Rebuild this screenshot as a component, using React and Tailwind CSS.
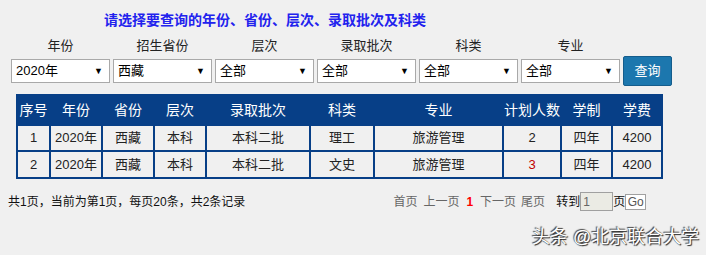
import React from "react";

const font = { fontFamily: "'Liberation Sans', 'Noto Sans CJK SC', sans-serif" };

const filters = [
  ["年份", "2020年"],
  ["招生省份", "西藏"],
  ["层次", "全部"],
  ["录取批次", "全部"],
  ["科类", "全部"],
  ["专业", "全部"],
];

const headers = ["序号", "年份", "省份", "层次", "录取批次", "科类", "专业", "计划人数", "学制", "学费"];
const widths = [33, 52, 52, 52, 104, 64, 129, 58, 51, 50];
const rows = [
  ["1", "2020年", "西藏", "本科", "本科二批", "理工", "旅游管理", "2", "四年", "4200"],
  ["2", "2020年", "西藏", "本科", "本科二批", "文史", "旅游管理", "3", "四年", "4200"],
];

function Select({ value }) {
  return (
    <div className="flex h-[24px] w-[99px] items-center justify-between border border-[#a9a9a9] bg-white pl-[4px] pr-[6px] text-[13px] text-black">
      <span>{value}</span>
      <span className="text-[9px] leading-none">▼</span>
    </div>
  );
}

export default function App() {
  return (
    <div className="relative h-[255px] w-[706px] overflow-hidden bg-[#f0f0f0] text-black" style={font}>
      <div className="pl-[104px] pt-[11px] text-[14px] font-bold leading-[18px] text-[#2222ee]">
        请选择要查询的年份、省份、层次、录取批次及科类
      </div>
      <div className="mt-[9px] flex items-end gap-[3px] pl-[11px]">
        {filters.map(([label, value]) => (
          <div key={label} className="flex flex-col items-center">
            <div className="mb-[5px] text-[13px] leading-[16px] text-[#222]">{label}</div>
            <Select value={value} />
          </div>
        ))}
        <button className="mb-[-3px] ml-[0px] h-[30px] w-[49px] rounded-[2px] border border-[#155d8c] bg-[#1c77ae] text-[13px] text-white">
          查询
        </button>
      </div>
      <table className="ml-[16px] mt-[11px] w-[645px] table-fixed border-collapse text-[13px]">
        <colgroup>
          {widths.map((w, i) => (
            <col key={i} style={{ width: w }} />
          ))}
        </colgroup>
        <thead>
          <tr className="h-[30px] bg-[#073f87] text-white">
            {headers.map((h) => (
              <th key={h} className="border-2 border-[#073f87] p-0 text-[14px] font-normal">
                {h}
              </th>
            ))}
          </tr>
        </thead>
        <tbody>
          {rows.map((r, ri) => (
            <tr key={ri} className={ri === 0 ? "h-[26px]" : "h-[27px]"}>
              {r.map((c, ci) => (
                <td
                  key={ci}
                  className={`border-2 border-[#073f87] p-0 text-center text-[13px] ${ci === 7 && ri === 1 ? "text-[#c00000]" : "text-[#222]"}`}
                >
                  {c}
                </td>
              ))}
            </tr>
          ))}
        </tbody>
      </table>
      <div className="mt-[13px] flex items-center text-[12px]">
        <div className="pl-[8px] text-[#111]">共1页，当前为第1页，每页20条，共2条记录</div>
        <div className="ml-[148px] flex items-center">
          <span className="text-[#666]">首页</span>
          <span className="ml-[6px] text-[#666]">上一页</span>
          <span className="ml-[7px] font-bold text-[#ff0000]">1</span>
          <span className="ml-[7px] text-[#666]">下一页</span>
          <span className="ml-[5px] text-[#666]">尾页</span>
          <span className="ml-[11px] text-[#111]">转到</span>
          <div className="flex h-[19px] w-[33px] items-center border border-[#a0a0a0] bg-[#ebebe4] pl-[2px] text-[12px] text-[#666]">1</div>
          <span className="text-[#111]">页</span>
          <div className="flex h-[16px] w-[21px] items-center justify-center border border-[#a0a0a0] bg-white text-[12px] text-[#555]">Go</div>
        </div>
      </div>
      <div
        className="absolute left-[532px] top-[226px] text-[18px] leading-[22px] text-white"
        style={{ textShadow: "1px 1px 1px #222, -1px -1px 1px #444" }}
      >
        头条 @北京联合大学
      </div>
    </div>
  );
}
